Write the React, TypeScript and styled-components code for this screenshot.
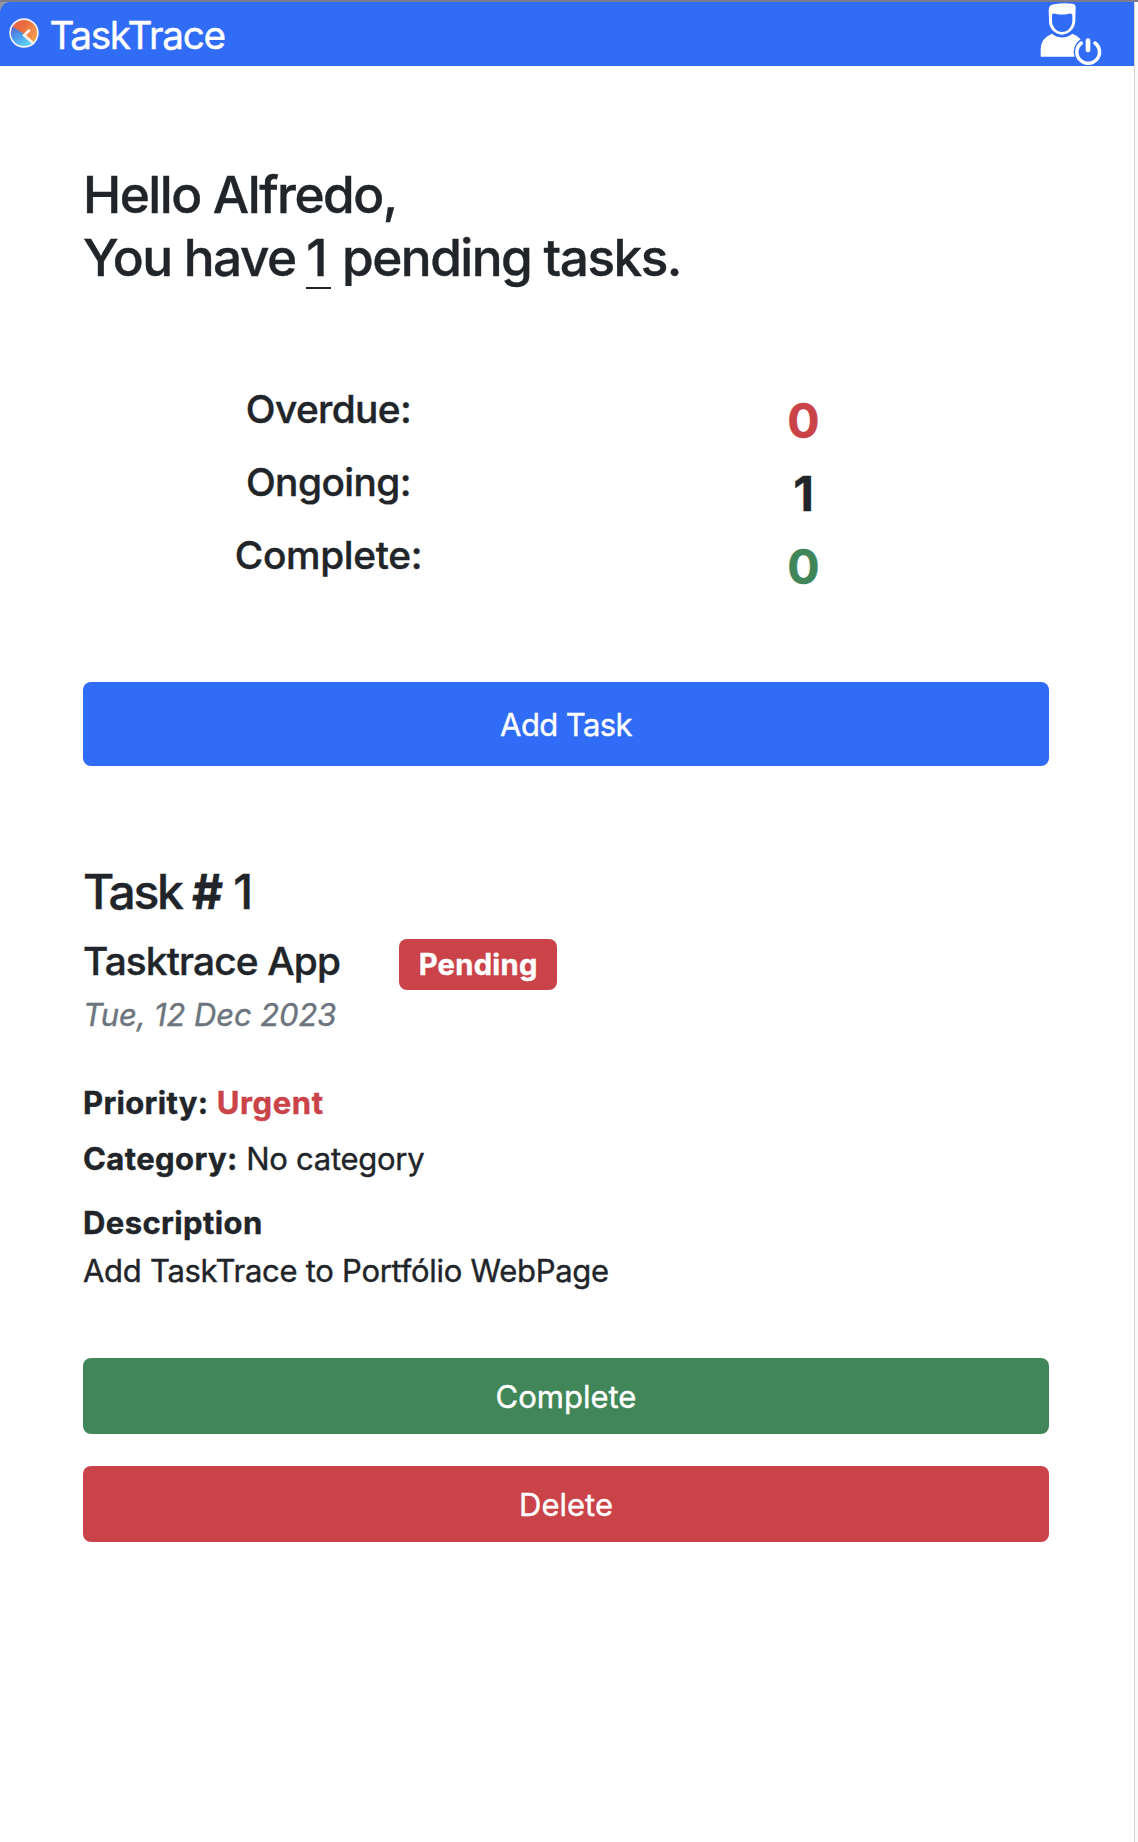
import React from "react";
import styled, { createGlobalStyle } from "styled-components";

const color = {
  primary: "#306cf5",
  danger: "#ca4349",
  success: "#418658",
  text: "#212529",
  muted: "#6c757d",
};

const GlobalStyle = createGlobalStyle`
  *, *::before, *::after { box-sizing: border-box; }
  body {
    margin: 0;
    background: #fff;
    color: ${color.text};
    font-family: Inter, "Noto Sans", sans-serif;
    font-size: 31px;
    line-height: 48px;
    -webkit-text-stroke: 0.4px currentColor;
  }
  h1, h2, h3, h4, p, dl, dt, dd { margin: 0; font-weight: inherit; }
`;

const Frame = styled.div`
  min-height: 1842px;
  display: grid;
  grid-template-columns: 1fr 4px;
  border-top: 2px solid #7c7c8c;
`;

const Page = styled.div`
  display: flex;
  flex-direction: column;
`;

const Gutter = styled.div`
  background: #fafafa;
  border-left: 1px solid #d4d4d4;
`;

const HeaderBacking = styled.div`
  background: #8f96a6;
`;

const Header = styled.header`
  height: 64px;
  display: flex;
  align-items: flex-start;
  padding: 0 32.5px 0 9px;
  background: ${color.primary};
  border-top-left-radius: 11px;
`;

const Brand = styled.div`
  flex: 1;
  display: flex;
  font-size: 38.8px;
  line-height: 66px;
  letter-spacing: -1.37px;
`;

const BrandName = styled.span`
  color: #fff;
  margin-left: 10.5px;
`;

const LogoMark = styled.svg`
  width: 30px;
  height: 30px;
  margin-top: 16px;
  display: block;
`;

const LogoutMark = styled.svg`
  width: 62px;
  height: 64px;
  display: block;
`;

const Content = styled.main`
  padding: 97px 85px 0 83px;
  display: flex;
  flex-direction: column;
`;

const Greeting = styled.h1`
  font-size: 51.3px;
  line-height: 63px;
  font-weight: 500;
  letter-spacing: -1.5px;
`;

const PendingCount = styled.span`
  display: inline-block;
  width: 25px;
  line-height: 59px;
  margin: 0 -1.5px 0 -1.5px;
  border-bottom: 2px solid ${color.text};
`;

const Stats = styled.dl`
  width: 950px;
  margin: 96px auto 0;
`;

const StatRow = styled.div`
  height: 73px;
  display: grid;
  grid-template-columns: 1fr 1fr;
  text-align: center;
`;

const StatLabel = styled.dt<{ $tracking: number }>`
  font-size: 38.8px;
  font-weight: 500;
  letter-spacing: ${(p) => p.$tracking}px;
`;

const StatValue = styled.dd<{ $color: string }>`
  padding-top: 7px;
  font-size: 48px;
  line-height: 58px;
  font-weight: 700;
  color: ${(p) => p.$color};
`;

const Button = styled.button<{ $bg: string; $height: number; $gap: number; $tracking?: number }>`
  height: ${(p) => p.$height}px;
  margin-top: ${(p) => p.$gap}px;
  padding: 2px 0 0;
  border: 0;
  border-radius: 8px;
  background: ${(p) => p.$bg};
  color: #fff;
  font: inherit;
  letter-spacing: ${(p) => p.$tracking ?? 0}px;
  -webkit-text-stroke: 0.4px #fff;
`;

const Task = styled.article`
  margin-top: 97px;
  display: flex;
  flex-direction: column;
`;

const TaskNumber = styled.h2`
  font-size: 48px;
  line-height: 58px;
  font-weight: 500;
  letter-spacing: -2.3px;
`;

const Hash = styled.strong`
  font-weight: 700;
  letter-spacing: -0.5px;
`;

const TitleRow = styled.div`
  height: 54px;
  margin-top: 16px;
  display: flex;
  align-items: flex-start;
`;

const TaskTitle = styled.h3`
  font-size: 38.8px;
  font-weight: 500;
  letter-spacing: -0.85px;
`;

const Badge = styled.span`
  width: 158px;
  height: 51px;
  margin: 2px 0 0 59px;
  border-radius: 8px;
  background: ${color.danger};
  color: #fff;
  font-size: 29.2px;
  line-height: 51px;
  font-weight: 700;
  letter-spacing: 0.26px;
  text-align: center;
`;

const DueDate = styled.p`
  color: ${color.muted};
  font-style: italic;
  letter-spacing: -0.1px;
`;

const Field = styled.p<{ $gap: number }>`
  margin-top: ${(p) => p.$gap}px;
  letter-spacing: -0.28px;
`;

const Strong = styled.strong<{ $color?: string; $tracking?: number }>`
  font-weight: 700;
  color: ${(p) => p.$color ?? "inherit"};
  letter-spacing: ${(p) => p.$tracking ?? 0.4}px;
`;

function Logo() {
  return (
    <LogoMark viewBox="0 0 30 30">
      <defs>
        <linearGradient id="warm" x1="0" y1="0" x2="1" y2="0.6">
          <stop offset="0" stopColor="#e0645c" />
          <stop offset="0.45" stopColor="#ea6a3e" />
          <stop offset="1" stopColor="#f3a04c" />
        </linearGradient>
        <linearGradient id="cool" x1="0" y1="0" x2="0.7" y2="1">
          <stop offset="0" stopColor="#6a5fc0" />
          <stop offset="0.4" stopColor="#4a8fe8" />
          <stop offset="1" stopColor="#5fd8f8" />
        </linearGradient>
      </defs>
      <circle cx="15" cy="15" r="14" fill="url(#warm)" />
      <path d="M15 16 L3 8 A14 14 0 0 0 24.5 25.3 Z" fill="url(#cool)" />
      <path d="M20 12.4 L15.2 17.2 L24 25" fill="none" stroke="#fbeee4" strokeWidth="2.8" strokeLinecap="round" />
      <circle cx="15" cy="15" r="13.9" fill="none" stroke="#f2f2f8" strokeWidth="1.6" />
    </LogoMark>
  );
}

function LogoutIcon() {
  return (
    <LogoutMark viewBox="28 6 186 192" fill="#fff">
      <path
        fillRule="evenodd"
        d="M54 30 Q55 14 70 13 Q98 8 124 11 Q135 12 135 21 L134 64 C133 86 114 104 94 104 C74 104 55 86 55 64 Z
           M64 44 L64 62 C64 81 79 96 94 96 C110 96 125 81 125 62 L125 44 Q120 38 112 42 Q94 45 77 42 Q69 38 64 44 Z"
      />
      <path d="M64 101 Q94 124 125 101 Q140 106 150 118 Q130 132 129 156 Q129 163 132 170 L30 170 L30 146 Q31 114 64 101 Z" />
      <path d="M152 129 A34 34 0 1 0 193 129" fill="none" stroke="#fff" strokeWidth="10.5" strokeLinecap="round" />
      <path d="M172 122 V150" stroke="#fff" strokeWidth="14" strokeLinecap="round" />
    </LogoutMark>
  );
}

const stats = [
  { label: "Overdue:", value: 0, tone: color.danger, tracking: -0.62 },
  { label: "Ongoing:", value: 1, tone: color.text, tracking: -0.54 },
  { label: "Complete:", value: 0, tone: color.success, tracking: -0.32 },
];

export default function App() {
  return (
    <>
      <GlobalStyle />
      <Frame>
        <Page>
          <HeaderBacking>
            <Header>
              <Brand>
                <Logo />
                <BrandName>TaskTrace</BrandName>
              </Brand>
              <LogoutIcon />
            </Header>
          </HeaderBacking>
          <Content>
            <Greeting>
              Hello Alfredo,
              <br />
              You have <PendingCount>1</PendingCount> pending tasks.
            </Greeting>
            <Stats>
              {stats.map((s) => (
                <StatRow key={s.label}>
                  <StatLabel $tracking={s.tracking}>{s.label}</StatLabel>
                  <StatValue $color={s.tone}>{s.value}</StatValue>
                </StatRow>
              ))}
            </Stats>
            <Button $bg={color.primary} $height={84} $gap={78} $tracking={-0.6}>
              Add Task
            </Button>
            <Task>
              <TaskNumber>
                Task <Hash>#</Hash> 1
              </TaskNumber>
              <TitleRow>
                <TaskTitle>Tasktrace App</TaskTitle>
                <Badge>Pending</Badge>
              </TitleRow>
              <DueDate>Tue, 12 Dec 2023</DueDate>
              <Field $gap={40}>
                <Strong $tracking={0.3}>Priority:</Strong>{" "}
                <Strong $color={color.danger} $tracking={0.6}>
                  Urgent
                </Strong>
              </Field>
              <Field $gap={8}>
                <Strong>Category:</Strong> No category
              </Field>
              <Field $gap={16}>
                <Strong>Description</Strong>
              </Field>
              <Field $gap={0}>Add TaskTrace to Portfólio WebPage</Field>
              <Button $bg={color.success} $height={76} $gap={63}>
                Complete
              </Button>
              <Button $bg={color.danger} $height={76} $gap={32}>
                Delete
              </Button>
            </Task>
          </Content>
        </Page>
        <Gutter />
      </Frame>
    </>
  );
}
